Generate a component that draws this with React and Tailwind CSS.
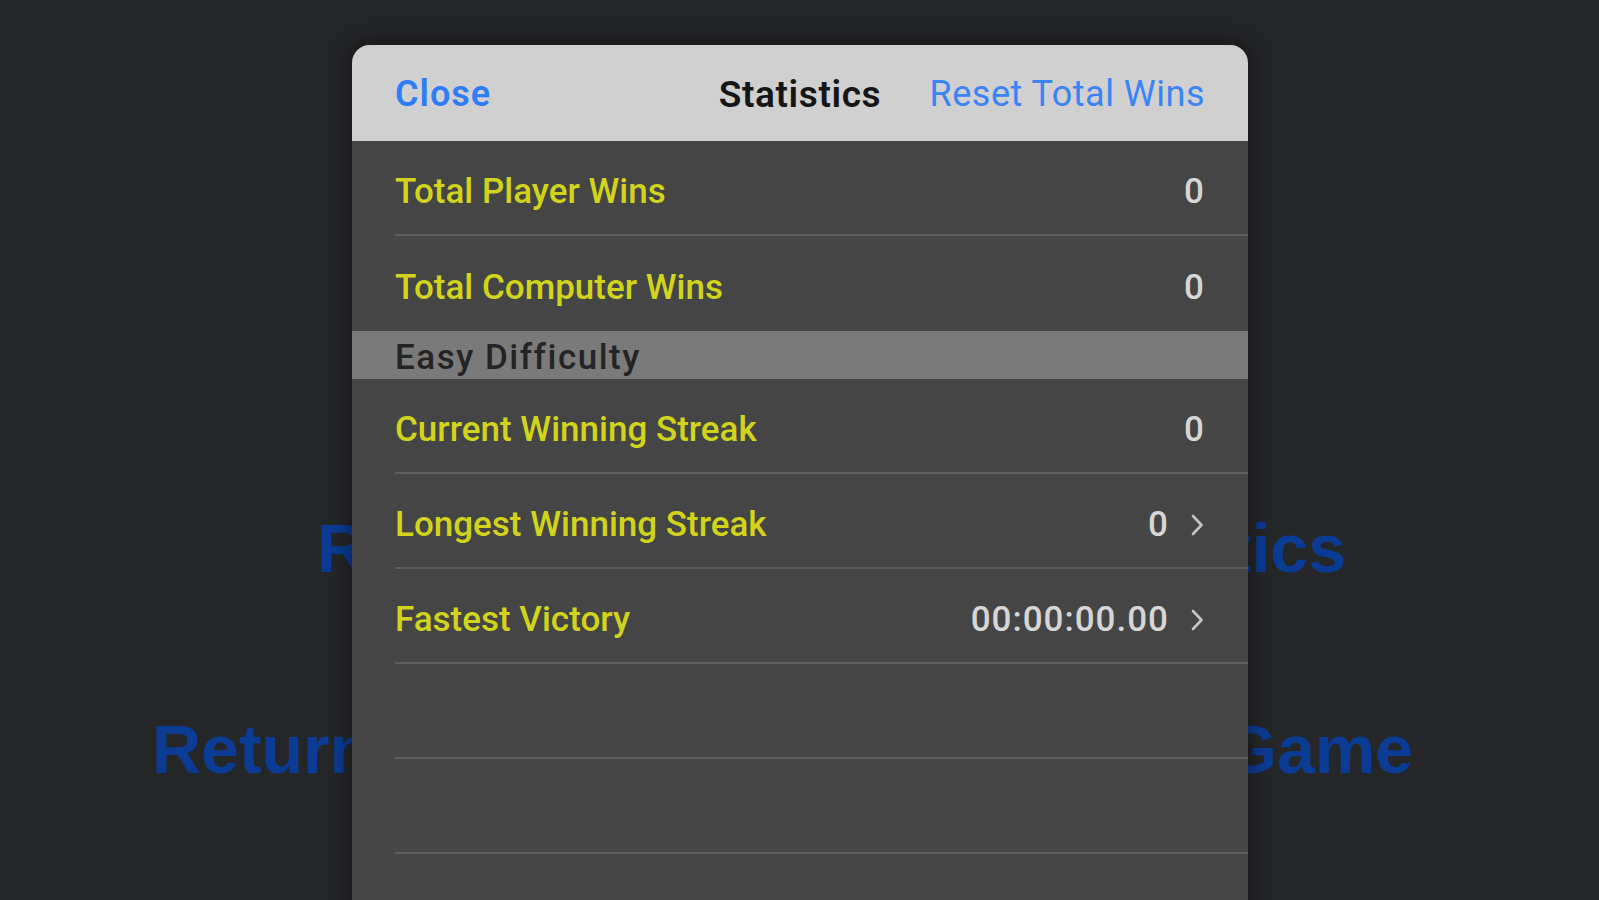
import React from "react";

function Chevron() {
  return (
    <svg width="16" height="26" viewBox="0 0 16 26" className="shrink-0">
      <path d="M4 4 L12.5 13 L4 22" fill="none" stroke="#c4c4c4" strokeWidth="2.6" strokeLinecap="round" strokeLinejoin="round" />
    </svg>
  );
}

function Row({ label, value, chevron, border = true }) {
  return (
    <div className="h-[95px] pl-[43px]">
      <div className={"h-full flex items-center pr-[43px] " + (border ? "border-b-2 border-[#5d5d5d]" : "")}>
        <div className="flex-1 flex items-center justify-between pt-[8px]">
          <span className="text-[#d2d41c]">{label}</span>
          <span className="flex items-center gap-[20px] text-[#d6d6d6]">
            <span className="tracking-[1px]">{value}</span>
            {chevron && <Chevron />}
          </span>
        </div>
      </div>
    </div>
  );
}

function EmptyRow() {
  return (
    <div className="h-[95px] pl-[43px]">
      <div className="h-full border-b-2 border-[#5d5d5d]" />
    </div>
  );
}

export default function App() {
  return (
    <div className="relative h-[900px] w-full overflow-hidden bg-[#252628]">
      <div className="pt-[514px] font-['Liberation_Sans',Arial,sans-serif] font-bold text-[68px] leading-[68px] text-[#0b3c95]">
        <div className="flex justify-between pl-[317px] pr-[253px]">
          <span>Rules</span>
          <span>Statistics</span>
        </div>
        <div className="mt-[133px] flex justify-between pl-[152px] pr-[186px]">
          <span>Return to Menu</span>
          <span>New Game</span>
        </div>
      </div>

      <div className="absolute left-[352px] top-[45px] w-[896px] h-[900px] rounded-t-[18px] overflow-hidden bg-[#454545] shadow-[0_0_24px_rgba(0,0,0,0.55)] font-['Roboto','Liberation_Sans',sans-serif] text-[35px] leading-none">
        <div className="h-[96px] bg-[#d0d0d0] px-[43px] grid grid-cols-[1fr_auto_1fr] items-center pt-[2px]">
          <span className="justify-self-start font-semibold text-[#2f7cf7] text-[36px] tracking-[1px]">Close</span>
          <span className="font-semibold text-[#161616] text-[37px] tracking-[0.6px]">Statistics</span>
          <span className="justify-self-end text-[#3a84f6] text-[36px] tracking-[0.5px]">Reset Total Wins</span>
        </div>
        <div className="font-medium">
          <Row label="Total Player Wins" value="0" />
          <Row label="Total Computer Wins" value="0" border={false} />
          <div className="h-[48px] bg-[#7a7a7a] pl-[43px] flex items-center pt-[4px]">
            <span className="text-[#242424] tracking-[1.5px]">Easy Difficulty</span>
          </div>
          <Row label="Current Winning Streak" value="0" />
          <Row label="Longest Winning Streak" value="0" chevron />
          <Row label="Fastest Victory" value="00:00:00.00" chevron />
          <EmptyRow />
          <EmptyRow />
          <EmptyRow />
        </div>
      </div>
    </div>
  );
}
